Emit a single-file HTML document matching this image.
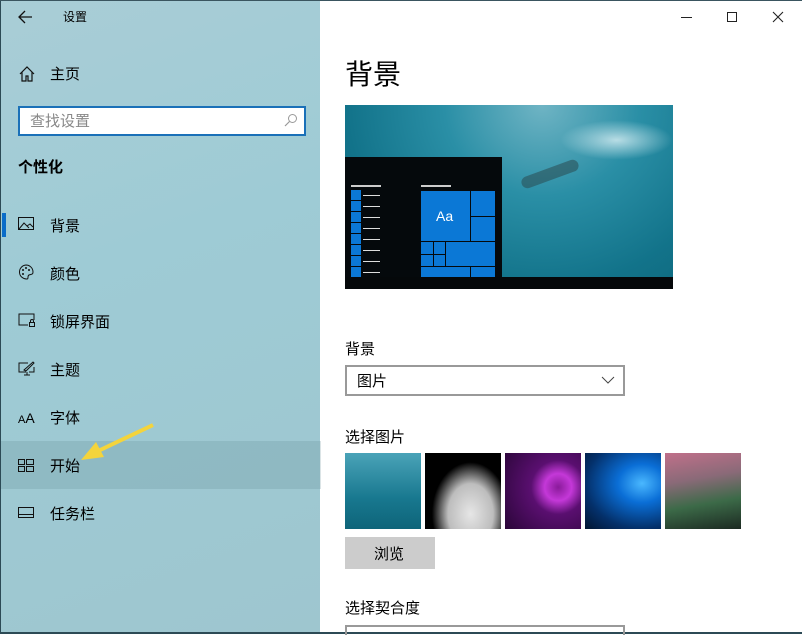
<!DOCTYPE html>
<html><head><meta charset="utf-8"><style>
*{margin:0;padding:0;box-sizing:border-box}
body{width:802px;height:634px;overflow:hidden;position:relative;background:#fff;font-family:"Liberation Sans","Noto Sans CJK SC",sans-serif;color:#000}
.a{position:absolute}
#side{left:0;top:0;width:320px;height:634px;background:linear-gradient(160deg,#a9cdd6 0%,#9ecbd5 40%,#9ec6cf 100%);border-left:1px solid #2c4a55}
.t{font-size:15px;position:absolute}
.ic{position:absolute;left:17px}
.tile{position:absolute;background:#0b78d6}
</style></head><body>
<div id="side" class="a">
 <svg class="a" style="left:16px;top:10px" width="16" height="14"><path d="M8 1L2 7L8 13M2 7H15" stroke="#111" stroke-width="1.3" fill="none"/></svg>
 <div class="t" style="left:62px;top:8px;font-size:12px">设置</div>
 <svg class="a" style="left:18px;top:66px" width="16" height="16"><path d="M1 8L8 1L15 8M3 6V15H7V10H9V15H13V6" stroke="#111" stroke-width="1.2" fill="none"/></svg>
 <div class="t" style="left:49px;top:63px">主页</div>
 <div class="a" style="left:17px;top:106px;width:288px;height:30px;background:#fff;border:2px solid #1a70b8"></div>
 <div class="t" style="left:29px;top:110px;color:#888">查找设置</div>
 <svg class="a" style="left:283px;top:113px" width="14" height="14"><circle cx="8.5" cy="5.5" r="4" stroke="#999" fill="none"/><path d="M5.5 8.5L1 13" stroke="#999" stroke-width="1.2"/></svg>
 <div class="t" style="left:17px;top:156px;font-weight:bold">个性化</div>
 <div class="a" style="left:1px;top:213px;width:4px;height:24px;background:#0a6cc8"></div>
 <svg class="ic" style="top:217px" width="17" height="14"><rect x=".5" y=".5" width="15" height="12" stroke="#111" fill="none"/><path d="M1 12L6 6L11 11M9 9L12 7L15 10" stroke="#111" fill="none"/></svg>
 <div class="t" style="left:49px;top:215px">背景</div>
 <svg class="ic" style="top:264px" width="17" height="17"><path d="M8 1A7 7 0 1 0 9 15C11 15 9 12 11 11S15 11 15 8A7 7 0 0 0 8 1Z" stroke="#111" fill="none"/><circle cx="5" cy="6" r="1" fill="#111"/><circle cx="8" cy="4" r="1" fill="#111"/><circle cx="11" cy="6" r="1" fill="#111"/><circle cx="5" cy="10" r="1" fill="#111"/></svg>
 <div class="t" style="left:49px;top:263px">颜色</div>
 <svg class="ic" style="top:313px" width="18" height="15"><path d="M10 12H1V1H16V7" stroke="#111" fill="none"/><rect x="11.5" y="9.5" width="5" height="4" stroke="#111" fill="none"/><path d="M12.5 9.5V8A1.5 1.5 0 0 1 15.5 8V9.5" stroke="#111" fill="none"/></svg>
 <div class="t" style="left:49px;top:311px">锁屏界面</div>
 <svg class="ic" style="top:361px" width="18" height="16"><path d="M8 11H1V2H10M16 6V11H11M6 14H12M9 11V14" stroke="#111" fill="none"/><path d="M6 9L15 1L16 2L8 10Z" stroke="#111" fill="none"/></svg>
 <div class="t" style="left:49px;top:359px">主题</div>
 <div class="t" style="left:17px;top:410px;font-size:11px">A<span style="font-size:14px">A</span></div>
 <div class="t" style="left:49px;top:407px">字体</div>
 <div class="a" style="left:0;top:441px;width:320px;height:48px;background:rgba(90,130,140,.22)"></div>
 <svg class="ic" style="top:459px" width="17" height="13"><rect x=".5" y=".5" width="6" height="5" stroke="#111" fill="none"/><rect x="8.5" y=".5" width="7" height="5" stroke="#111" fill="none"/><rect x=".5" y="7.5" width="6" height="5" stroke="#111" fill="none"/><rect x="8.5" y="7.5" width="7" height="5" stroke="#111" fill="none"/></svg>
 <div class="t" style="left:49px;top:455px">开始</div>
 <svg class="ic" style="top:507px" width="17" height="12"><rect x=".5" y=".5" width="15" height="10" stroke="#111" fill="none"/><path d="M1 7.5H16" stroke="#111"/></svg>
 <div class="t" style="left:49px;top:503px">任务栏</div>
 <svg class="a" style="left:75px;top:420px" width="80" height="45"><path d="M77 5L20 32" stroke="#f4d43c" stroke-width="4"/><path d="M5 40L20 22L28 37Z" fill="#f4d43c"/></svg>
</div>
<div class="a" style="left:0;top:632px;width:802px;height:2px;background:#2c4a55"></div>
<div class="a" style="left:0;top:0;width:802px;height:1px;background:#3a5560"></div>
<div class="a" style="left:681px;top:17px;width:11px;height:1px;background:#222"></div>
<div class="a" style="left:727px;top:12px;width:10px;height:10px;border:1px solid #222"></div>
<svg class="a" style="left:772px;top:11px" width="12" height="12"><path d="M1 1L11 11M11 1L1 11" stroke="#222" stroke-width="1.1"/></svg>
<div class="t" style="left:345px;top:53px;font-size:28px">背景</div>
<div class="a" style="left:345px;top:105px;width:328px;height:184px;background:radial-gradient(ellipse at 60% 0%,#6fb4c4 0%,#2a8fa6 35%,#12738a 70%,#0d6578 100%)"></div>
<div class="a" style="left:560px;top:120px;width:113px;height:40px;background:radial-gradient(ellipse,#b8dde5 0%,rgba(160,210,220,0) 70%)"></div>
<div class="a" style="left:520px;top:168px;width:60px;height:12px;background:#2a4a50;transform:rotate(-20deg);border-radius:6px;opacity:.55"></div>
<div class="a" style="left:345px;top:277px;width:328px;height:12px;background:#05080a"></div>
<div class="a" style="left:345px;top:157px;width:157px;height:120px;background:#05090c"></div>
<div class="a" style="left:351px;top:185px;width:30px;height:2px;background:#ccc"></div>
<div class="a" style="left:421px;top:185px;width:30px;height:2px;background:#ccc"></div>
<div class="a" style="left:351px;top:190px;width:10px;height:87px;background:repeating-linear-gradient(#0b78d6 0 10px,#05090c 10px 11px)"></div>
<div class="a" style="left:363px;top:194px;width:17px;height:80px;background:repeating-linear-gradient(#05090c 0 1px,#ddd 1px 2px,#05090c 2px 11px)"></div>
<div class="tile" style="left:421px;top:191px;width:49px;height:50px;color:#fff;font-size:14px;padding:17px 0 0 15px">Aa</div>
<div class="tile" style="left:471px;top:191px;width:24px;height:25px"></div>
<div class="tile" style="left:471px;top:217px;width:24px;height:24px"></div>
<div class="tile" style="left:421px;top:242px;width:12px;height:12px"></div>
<div class="tile" style="left:434px;top:242px;width:11px;height:12px"></div>
<div class="tile" style="left:421px;top:255px;width:12px;height:11px"></div>
<div class="tile" style="left:434px;top:255px;width:11px;height:11px"></div>
<div class="tile" style="left:446px;top:242px;width:49px;height:24px"></div>
<div class="tile" style="left:421px;top:267px;width:49px;height:10px"></div>
<div class="tile" style="left:471px;top:267px;width:24px;height:10px"></div>
<div class="t" style="left:345px;top:338px">背景</div>
<div class="a" style="left:345px;top:365px;width:280px;height:31px;border:2px solid #999"></div>
<div class="t" style="left:357px;top:370px">图片</div>
<svg class="a" style="left:601px;top:376px" width="14" height="8"><path d="M1 1L7 7L13 1" stroke="#444" fill="none"/></svg>
<div class="t" style="left:345px;top:426px">选择图片</div>
<div class="a" style="left:345px;top:453px;width:76px;height:76px;background:linear-gradient(180deg,#4aa3b8,#18788f 60%,#0e6479)"></div>
<div class="a" style="left:425px;top:453px;width:76px;height:76px;background:radial-gradient(ellipse at 60% 80%,#e6e6e6 0%,#bdbdbd 35%,#000 60%)"></div>
<div class="a" style="left:505px;top:453px;width:76px;height:76px;background:radial-gradient(circle at 70% 45%,#8a1a9a 0%,#c438d8 20%,#5a0f70 40%,#2a0638 100%)"></div>
<div class="a" style="left:585px;top:453px;width:76px;height:76px;background:radial-gradient(ellipse at 75% 40%,#4ab8ff 0%,#0a6ed6 30%,#04306a 70%,#021530 100%)"></div>
<div class="a" style="left:665px;top:453px;width:76px;height:76px;background:linear-gradient(170deg,#c0708a 0%,#8a6a78 35%,#3c6a48 65%,#1c2a22 100%)"></div>
<div class="a" style="left:345px;top:537px;width:90px;height:32px;background:#ccc"></div>
<div class="t" style="left:374px;top:543px">浏览</div>
<div class="t" style="left:345px;top:597px">选择契合度</div>
<div class="a" style="left:345px;top:625px;width:280px;height:10px;border:2px solid #999;border-bottom:none"></div>
</body></html>
